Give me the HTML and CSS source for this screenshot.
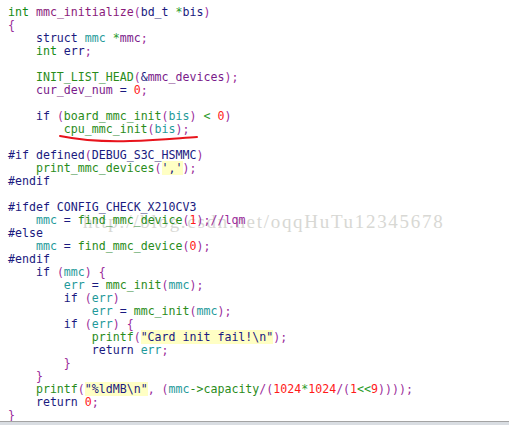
FILE: index.html
```html
<!DOCTYPE html>
<html lang="en">
<head>
    <meta charset="UTF-8">
    <title>mmc_initialize</title>
    <link rel="stylesheet" href="styles.css">
</head>
<body>

<div class="editor">
<pre class="code"><span class="ty">int</span> <span class="fn">mmc_initialize</span><span class="p">(</span><span class="kw">bd_t</span> <span class="op">*</span><span class="kw">bis</span><span class="p">)</span>
<span class="p">{</span>
    <span class="kw">struct</span> <span class="var">mmc</span> <span class="op">*</span><span class="id">mmc</span><span class="p">;</span>
    <span class="ty">int</span> <span class="kw">err</span><span class="p">;</span>

    <span class="call">INIT_LIST_HEAD</span><span class="p">(</span><span class="kw">&amp;</span><span class="id">mmc_devices</span><span class="p">);</span>
    <span class="id">cur_dev_num</span> <span class="kw">=</span> <span class="num">0</span><span class="p">;</span>

    <span class="kw">if</span> <span class="p">(</span><span class="call">board_mmc_init</span><span class="p">(</span><span class="var">bis</span><span class="p">)</span> <span class="op">&lt;</span> <span class="num">0</span><span class="p">)</span>
        <span class="call">cpu_mmc_init</span><span class="p">(</span><span class="var">bis</span><span class="p">);</span>

<span class="kw">#if defined</span><span class="p">(</span><span class="kw">DEBUG_S3C_HSMMC</span><span class="p">)</span>
    <span class="call">print_mmc_devices</span><span class="p">(</span><span class="str">','</span><span class="p">);</span>
<span class="kw">#endif</span>

<span class="kw">#ifdef CONFIG_CHECK_X210CV3</span>
    <span class="var">mmc</span> <span class="kw">=</span> <span class="call">find_mmc_device</span><span class="p">(</span><span class="num">1</span><span class="p">);//lqm</span>
<span class="kw">#else</span>
    <span class="var">mmc</span> <span class="kw">=</span> <span class="call">find_mmc_device</span><span class="p">(</span><span class="num">0</span><span class="p">);</span>
<span class="kw">#endif</span>
    <span class="kw">if</span> <span class="p">(</span><span class="var">mmc</span><span class="p">) {</span>
        <span class="var">err</span> <span class="kw">=</span> <span class="call">mmc_init</span><span class="p">(</span><span class="var">mmc</span><span class="p">);</span>
        <span class="kw">if</span> <span class="p">(</span><span class="var">err</span><span class="p">)</span>
            <span class="var">err</span> <span class="kw">=</span> <span class="call">mmc_init</span><span class="p">(</span><span class="var">mmc</span><span class="p">);</span>
        <span class="kw">if</span> <span class="p">(</span><span class="var">err</span><span class="p">) {</span>
            <span class="call">printf</span><span class="p">(</span><span class="str">"Card init fail!\n"</span><span class="p">);</span>
            <span class="kw">return</span> <span class="var">err</span><span class="p">;</span>
        <span class="p">}</span>
    <span class="p">}</span>
    <span class="call">printf</span><span class="p">(</span><span class="str">"%ldMB\n"</span><span class="p">, (</span><span class="var">mmc</span><span class="call">-&gt;capacity</span><span class="p">/(</span><span class="num">1024</span><span class="op">*</span><span class="num">1024</span><span class="p">/(</span><span class="num">1</span><span class="op">&lt;&lt;</span><span class="num">9</span><span class="p">))));</span>
    <span class="kw">return</span> <span class="num">0</span><span class="p">;</span>
<span class="p">}</span></pre>

    <div class="watermark">http://blog.csdn.net/oqqHuTu12345678</div>

    <svg class="mark" width="509" height="425" viewBox="0 0 509 425">
        <path d="M60 136 C 80 140, 100 142, 130 141 S 180 138, 197 137" fill="none" stroke="#e8141c" stroke-width="2" stroke-linecap="round"/>
    </svg>
</div>
<div class="statusbar"></div>

</body>
</html>
```

FILE: styles.css
```css
body {
    margin: 0;
    background-color: #ffffff;
    overflow: hidden;
}
.editor {
    position: relative;
    height: 421px;
    overflow: hidden;
    border-bottom: 1px solid #a3a3a3;
}
.code {
    margin: 0;
    padding: 6px 0 0 8px;
    font-family: "DejaVu Sans Mono", "Liberation Mono", monospace;
    font-size: 11.6px;
    line-height: 13px;
    color: #1a1a80;
    position: relative;
    z-index: 1;
}
.ty {
    color: #128a12;
}
.fn {
    color: #8a1a7a;
}
.kw {
    color: #1a1a80;
}
.p {
    color: #9a2c9a;
}
.op {
    color: #2a9a2a;
}
.id {
    color: #7a1a8a;
}
.var {
    color: #1f9a9a;
}
.call {
    color: #2a8c1a;
}
.num {
    color: #ff1a1a;
}
.str {
    color: #1a1a80;
    background-color: #ffffc4;
}
.watermark {
    position: absolute;
    left: 83px;
    top: 211px;
    font-family: "Liberation Serif", "DejaVu Serif", serif;
    font-size: 19px;
    letter-spacing: 1.7px;
    line-height: 22px;
    color: #d8d8d4;
    z-index: 0;
}
.mark {
    position: absolute;
    left: 0;
    top: 0;
    z-index: 2;
}
.statusbar {
    height: 3px;
    background-color: #d9dde2;
}
```
